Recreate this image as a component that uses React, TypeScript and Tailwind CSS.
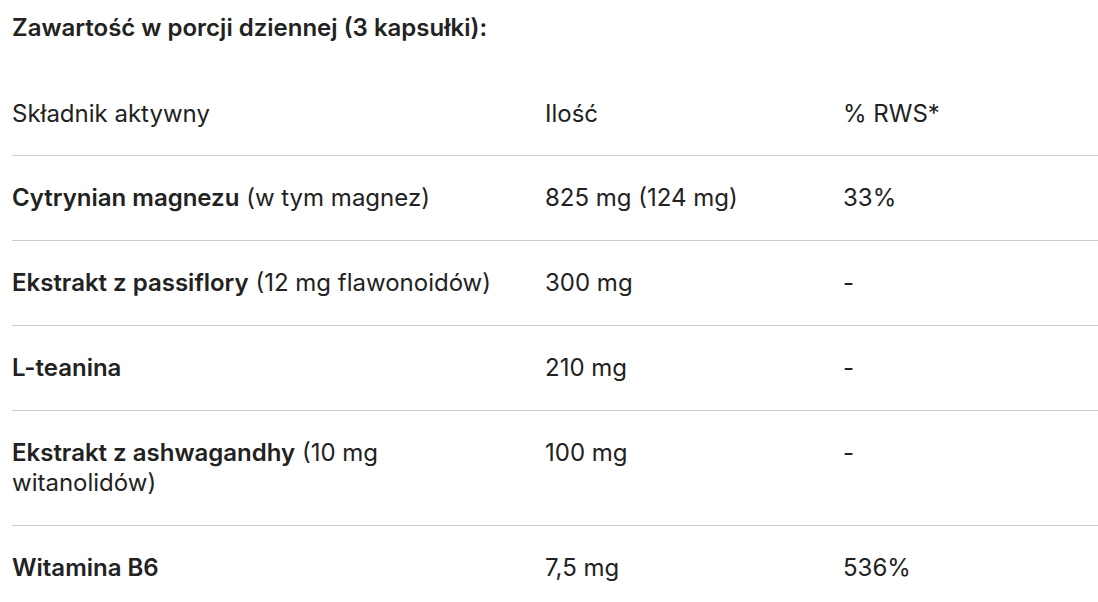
import React from "react";

type Row = { bold: string; rest?: string; amount: string; rws: string };

const rows: Row[] = [
  { bold: "Cytrynian magnezu", rest: " (w tym magnez)", amount: "825 mg (124 mg)", rws: "33%" },
  { bold: "Ekstrakt z passiflory", rest: " (12 mg flawonoidów)", amount: "300 mg", rws: "-" },
  { bold: "L-teanina", amount: "210 mg", rws: "-" },
  { bold: "Ekstrakt z ashwagandhy", rest: " (10 mg witanolidów)", amount: "100 mg", rws: "-" },
  { bold: "Witamina B6", amount: "7,5 mg", rws: "536%" },
];

export default function App() {
  return (
    <div
      className="w-[1098px] h-[602px] bg-white text-[#222222] overflow-hidden pl-3"
      style={{ fontFamily: "Inter, 'Noto Sans', sans-serif" }}
    >
      <h2 className="pt-[13px] text-[24px] leading-[30px] font-semibold">
        Zawartość w porcji dziennej (3 kapsułki):
      </h2>
      <div className="mt-[56px] text-[24px] leading-[30px]">
        <div className="grid grid-cols-[533px_298px_1fr] pb-[26px] border-b border-[#cccccc]">
          <div>Składnik aktywny</div>
          <div>Ilość</div>
          <div>% RWS*</div>
        </div>
        {rows.map((r, i) => (
          <div
            key={i}
            className={`grid grid-cols-[533px_298px_1fr] py-[27px] ${
              i < rows.length - 1 ? "border-b border-[#cccccc]" : ""
            }`}
          >
            <div className="pr-[40px]">
              <span className="font-semibold">{r.bold}</span>
              {r.rest}
            </div>
            <div>{r.amount}</div>
            <div>{r.rws}</div>
          </div>
        ))}
      </div>
    </div>
  );
}
